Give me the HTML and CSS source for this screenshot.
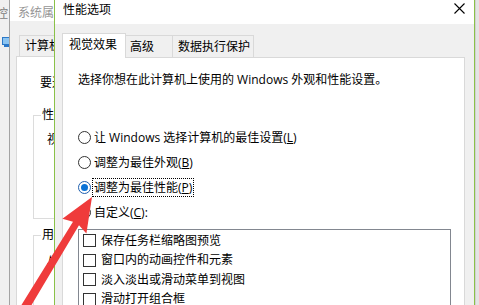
FILE: index.html
```html
<!DOCTYPE html>
<html lang="zh-CN">
<head>
<meta charset="utf-8">
<title>性能选项</title>
<link rel="stylesheet" href="styles.css">
</head>
<body>
<div class="screen">
  <div class="bgwin">
    <div class="bg-title">控</div>
    <svg class="bg-icon" width="8" height="10" viewBox="0 0 8 10"><rect x="0.5" y="0.5" width="7.5" height="7" fill="#8cc4f0" stroke="#2b78c8"/><rect x="2" y="8" width="5" height="2" fill="#2b78c8"/></svg>
  </div>
  <div class="syswin">
    <div class="sys-title">系统属性</div>
    <div class="sys-body">
      <div class="sys-tabs"><div class="sys-tab">计算机名</div></div>
      <div class="sys-panel">
        <p class="sys-note">要进行大多数更改</p>
        <div class="group">
          <span class="legend">性能</span>
          <p class="group-text">视觉效果</p>
        </div>
        <div class="group group2">
          <span class="legend">用户配置文件</span>
          <p class="group-text g2">与登录帐户</p>
        </div>
      </div>
    </div>
  </div>
  <div class="dialog">
    <div class="titlebar">
      <span class="title">性能选项</span>
      <svg class="close" width="11" height="11" viewBox="0 0 11 11"><path d="M0.5 0.5 L10.5 10.5 M10.5 0.5 L0.5 10.5" stroke="#000" stroke-width="1.1" fill="none"/></svg>
    </div>
    <div class="body">
      <div class="tabs">
        <div class="tab active t1">视觉效果</div>
        <div class="tab t2">高级</div>
        <div class="tab t3">数据执行保护</div>
      </div>
      <div class="panel">
        <p class="desc">选择你想在此计算机上使用的 Windows 外观和性能设置。</p>
        <div class="options">
          <div class="opt"><span class="radio"></span><span class="label">让 Windows 选择计算机的最佳设置(<u>L</u>)</span></div>
          <div class="opt"><span class="radio"></span><span class="label">调整为最佳外观(<u>B</u>)</span></div>
          <div class="opt"><span class="radio checked"></span><span class="label focus">调整为最佳性能(<u>P</u>)</span></div>
          <div class="opt"><span class="radio"></span><span class="label">自定义(<u>C</u>):</span></div>
        </div>
        <div class="listbox">
          <div class="item"><span class="check"></span>保存任务栏缩略图预览</div>
          <div class="item"><span class="check"></span>窗口内的动画控件和元素</div>
          <div class="item"><span class="check"></span>淡入淡出或滑动菜单到视图</div>
          <div class="item"><span class="check"></span>滑动打开组合框</div>
        </div>
      </div>
    </div>
  </div>
  <div class="rightwin"></div>
</div>
<svg class="arrow" width="479" height="305" viewBox="0 0 479 305">
  <polygon points="92,197 86.4,233.4 79,225.3 23.2,319 15.6,314.4 73,221.7 62.4,218.8" fill="#ef3b3b"/>
</svg>
</body>
</html>
```

FILE: styles.css
```css
* { box-sizing: border-box; margin: 0; padding: 0; }

html, body {
  width: 479px;
  height: 305px;
  overflow: hidden;
}

body {
  position: relative;
  background: #f0f0f0;
  color: #000;
  font-family: "Open Sans", "Noto Sans CJK SC", sans-serif;
  font-size: 12px;
  line-height: 16px;
}

.screen {
  display: flex;
  height: 305px;
}

/* far-left background window */
.bgwin {
  width: 10px;
  flex: none;
  background: #f0f0f0;
  border-right: 1px solid #a3a3a3;
  overflow: hidden;
  white-space: nowrap;
}
.bg-title {
  margin-left: -4px;
  padding-top: 6px;
  color: #7d7d7d;
}
.bg-icon {
  display: block;
  margin: 15px 0 0 2px;
}

/* System Properties window behind */
.syswin {
  width: 44px;
  flex: none;
  display: flex;
  flex-direction: column;
  overflow: hidden;
  white-space: nowrap;
  background: #f0f0f0;
}
.sys-title {
  height: 24px;
  background: #fff;
  padding: 5px 0 0 8px;
  color: #959595;
}
.sys-body {
  flex: 1;
  display: flex;
  flex-direction: column;
}
.sys-tabs {
  display: flex;
  height: 35px;
  align-items: flex-end;
  padding-left: 9px;
}
.sys-tab {
  height: 21px;
  border: 1px solid #d9d9d9;
  border-bottom: none;
  padding-left: 5px;
  line-height: 19px;
}
.sys-panel {
  flex: 1;
  margin-left: 6px;
  background: #fff;
  border: 1px solid #d9d9d9;
  border-right: none;
  padding: 18px 0 0 16px;
}
.sys-note {
  padding-left: 7px;
}
.group {
  margin-top: 24px;
  height: 104px;
  border: 1px solid #dcdcdc;
  border-right: none;
}
.group2 {
  margin-top: 16px;
  height: 80px;
}
.legend {
  display: block;
  width: max-content;
  margin: -9px 0 0 7px;
  padding: 0 1px;
  background: #fff;
}
.group-text {
  margin-top: 9px;
  padding-left: 13px;
}
.group-text.g2 {
  margin-top: 11px;
}

/* Performance Options dialog */
.dialog {
  width: 421px;
  flex: none;
  display: flex;
  flex-direction: column;
  border-left: 1px solid #8ac148;
  border-right: 1px solid #8ac148;
  background: #f0f0f0;
}
.titlebar {
  height: 24px;
  flex: none;
  background: #fff;
  display: flex;
  justify-content: space-between;
  align-items: flex-start;
}
.title {
  padding-left: 8px;
  line-height: 20px;
}
.close {
  display: block;
  margin: 3px 9px 0 0;
}
.body {
  flex: 1;
  display: flex;
  flex-direction: column;
  padding: 9px 9px 0 7px;
}
.tabs {
  display: flex;
  align-items: flex-end;
  height: 24px;
  flex: none;
}
.tab {
  height: 22px;
  border: 1px solid #d9d9d9;
  border-bottom: none;
  line-height: 21px;
  white-space: nowrap;
  background: #f0f0f0;
}
.tab.active {
  position: relative;
  z-index: 1;
  height: 25px;
  margin-bottom: -1px;
  background: #fff;
  line-height: 22px;
}
.t1 { width: 64px; padding-left: 6px; }
.t2 { width: 47px; padding-left: 4px; border-left: none; }
.t3 { width: 81px; padding-left: 5px; border-left: none; }

.panel {
  flex: 1;
  background: #fff;
  border: 1px solid #d9d9d9;
  padding: 14px 0 0 15px;
}
.options {
  margin-top: 37px;
}
.opt {
  height: 25px;
  display: flex;
  align-items: center;
  white-space: nowrap;
}
.radio {
  width: 13px;
  height: 13px;
  flex: none;
  border: 1px solid #333;
  border-radius: 50%;
  background: #fff;
  display: flex;
  align-items: center;
  justify-content: center;
}
.radio.checked {
  border-color: #1f5fae;
}
.radio.checked::after {
  content: "";
  width: 7px;
  height: 7px;
  border-radius: 50%;
  background: #0a72d6;
}
.label {
  margin-left: 1px;
  border: 1px solid transparent;
  padding: 0 1px;
  line-height: 17px;
}
.label.focus {
  border: 1px dotted #000;
}
.label u {
  text-underline-offset: 1px;
}

.listbox {
  margin-top: 4px;
  width: 373px;
  height: 100px;
  border: 1px solid #828790;
  background: #fff;
  padding: 1px 0 0 4px;
}
.item {
  height: 19.5px;
  display: flex;
  align-items: center;
  white-space: nowrap;
}
.check {
  width: 13px;
  height: 13px;
  flex: none;
  border: 1px solid #333;
  background: #fff;
  margin-right: 5px;
}

.rightwin {
  flex: 1;
  background: #e4e4e4;
  border-left: 1px solid #d0d0d0;
}

/* annotation arrow drawn over the screenshot */
.arrow {
  position: absolute;
  left: 0;
  top: 0;
  pointer-events: none;
}
```
